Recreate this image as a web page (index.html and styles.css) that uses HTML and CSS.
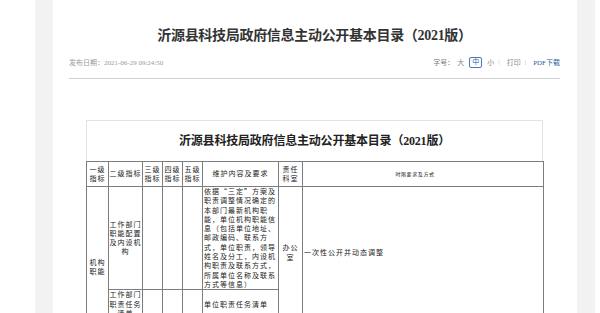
FILE: index.html
```html
<!DOCTYPE html>
<html lang="zh-CN">
<head>
<meta charset="utf-8">
<title>沂源县科技局政府信息主动公开基本目录（2021版）</title>
<link rel="stylesheet" href="styles.css">
</head>
<body>
<div class="wrap">
  <div class="page">
    <h1 class="title">沂源县科技局政府信息主动公开基本目录（2021版）</h1>
    <div class="meta">
      <span class="date">发布日期：2021-06-29 09:24:50</span>
      <div class="tools">
        <span class="lbl">字号：</span>
        <span class="fs">大</span>
        <span class="fs cur">中</span>
        <span class="fs">小</span>
        <span class="sep">|</span>
        <span class="tool">打印</span>
        <span class="sep">|</span>
        <span class="tool pdf">PDF下载</span>
      </div>
    </div>
    <div class="doc">
      <div class="doc-title">沂源县科技局政府信息主动公开基本目录（2021版）</div>
      <table class="grid">
        <colgroup>
          <col class="c1"><col class="c2"><col class="c3"><col class="c4"><col class="c5"><col class="c6"><col class="c7"><col class="c8">
        </colgroup>
        <thead>
          <tr>
            <th>一级指标</th>
            <th>二级指标</th>
            <th>三级指标</th>
            <th>四级指标</th>
            <th>五级指标</th>
            <th>维护内容及要求</th>
            <th>责任科室</th>
            <th class="small">时限要求及方式</th>
          </tr>
        </thead>
        <tbody>
          <tr>
            <td rowspan="3" class="ctr">机构职能</td>
            <td class="ctr">工作部门职能配置及内设机构</td>
            <td></td>
            <td></td>
            <td></td>
            <td>依据“三定”方案及职责调整情况确定的本部门最新机构职能，单位机构职能信息（包括单位地址、邮政编码、联系方式，单位职责，领导姓名及分工，内设机构职责及联系方式，所属单位名称及联系方式等信息）</td>
            <td rowspan="2" class="ctr">办公室</td>
            <td rowspan="2">一次性公开并动态调整</td>
          </tr>
          <tr>
            <td class="ctr">工作部门职责任务清单</td>
            <td></td>
            <td></td>
            <td></td>
            <td>单位职责任务清单</td>
          </tr>
          <tr>
            <td class="ctr">单位领导班子成员信息</td>
            <td></td>
            <td></td>
            <td></td>
            <td>领导姓名、职务、分工</td>
            <td class="ctr">办公室</td>
            <td>一次性公开并动态调整</td>
          </tr>
        </tbody>
      </table>
    </div>
  </div>
</div>
</body>
</html>
```
FILE: styles.css
```css
html, body {
  margin: 0;
  padding: 0;
  background: #ffffff;
}

body {
  font-family: "Liberation Serif", "Noto Sans CJK SC", serif;
  color: #333;
}

.wrap {
  margin-left: 35px;
  width: 524px;
  padding: 0 18px;
  background: #f2f2f2;
  min-height: 313px;
}

.page {
  background: #fff;
  min-height: 313px;
  padding: 26px 17px 0 16px;
  box-sizing: border-box;
}

.title {
  margin: 0;
  font-size: 14px;
  line-height: 20px;
  font-weight: 700;
  text-align: center;
  color: #333;
  letter-spacing: -0.3px;
}

.meta {
  display: flex;
  justify-content: space-between;
  align-items: center;
  margin-top: 10px;
  height: 12px;
  padding-bottom: 10px;
  border-bottom: 1px solid #cfcfcf;
  font-size: 7px;
}

.date {
  color: #9a9a9a;
  font-size: 7px;
}

.tools {
  display: flex;
  align-items: center;
  color: #888;
  font-size: 7px;
}

.lbl {
  color: #777;
}

.fs {
  margin-left: 3px;
  color: #888;
}

.fs.cur {
  margin-left: 5px;
  margin-right: 2px;
  color: #2f5f9e;
  border: 1px solid #4a78b5;
  border-radius: 2px;
  padding: 0 2px;
  line-height: 9px;
  height: 9px;
}

.sep {
  color: #9fc0e6;
  margin: 0 7px 0 4px;
}

.tool {
  color: #888;
}

.tool.pdf {
  color: #2f5f9e;
}

.doc {
  margin: 41px 17px 0 17px;
}

.doc-title {
  height: 40px;
  line-height: 40px;
  border: 1px solid #e3e3e3;
  border-bottom: none;
  text-align: center;
  font-size: 12px;
  font-weight: 700;
  color: #222;
  letter-spacing: -0.2px;
}

.grid {
  width: 457px;
  table-layout: fixed;
  border-collapse: collapse;
  font-family: "Noto Sans CJK SC", "Liberation Serif", sans-serif;
  font-size: 7px;
  letter-spacing: 1px;
  color: #222;
}

.grid col.c1 { width: 22px; }
.grid col.c2 { width: 34px; }
.grid col.c3 { width: 20px; }
.grid col.c4 { width: 20px; }
.grid col.c5 { width: 20px; }
.grid col.c6 { width: 76px; }
.grid col.c7 { width: 24px; }
.grid col.c8 { width: 241px; }

.grid th,
.grid td {
  border: 1px solid #7d7d7d;
  padding: 0 0 0 1px;
  line-height: 9.3px;
  vertical-align: middle;
  font-weight: 400;
  word-break: break-all;
}

.grid th {
  height: 24px;
  text-align: center;
  padding: 0;
}

.grid th.small {
  font-size: 5px;
  letter-spacing: 0.6px;
  padding-right: 16px;
}

.grid td {
  text-align: left;
}

.grid td.ctr {
  text-align: center;
  padding: 0;
}
```
